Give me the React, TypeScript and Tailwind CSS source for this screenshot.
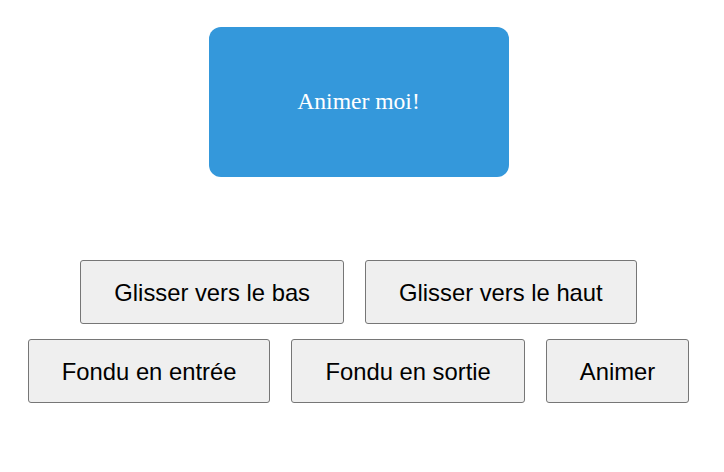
import React from "react";

const buttons = [
  "Glisser vers le bas",
  "Glisser vers le haut",
  "Fondu en entrée",
  "Fondu en sortie",
  "Animer",
];

export default function App() {
  return (
    <div className="w-[724px] h-[472px] bg-white pt-[27px] pr-[7px]">
      {/* Animated box */}
      <div className="mx-auto w-[300px] h-[150px] rounded-[12px] bg-[#3498db] flex items-center justify-center">
        <span className="text-white text-[23.6px] font-['Liberation_Serif',serif]">
          Animer moi!
        </span>
      </div>

      {/* Controls */}
      <div className="mt-[83px] flex flex-wrap justify-center gap-x-[21px] gap-y-[15px]">
        {buttons.map((label) => (
          <button
            key={label}
            className="h-[64px] px-[33px] pt-[2px] bg-[#efefef] border border-[#767676] rounded-[3px] text-black text-[23.8px] font-['Liberation_Sans',Arial,sans-serif]"
          >
            {label}
          </button>
        ))}
      </div>
    </div>
  );
}
